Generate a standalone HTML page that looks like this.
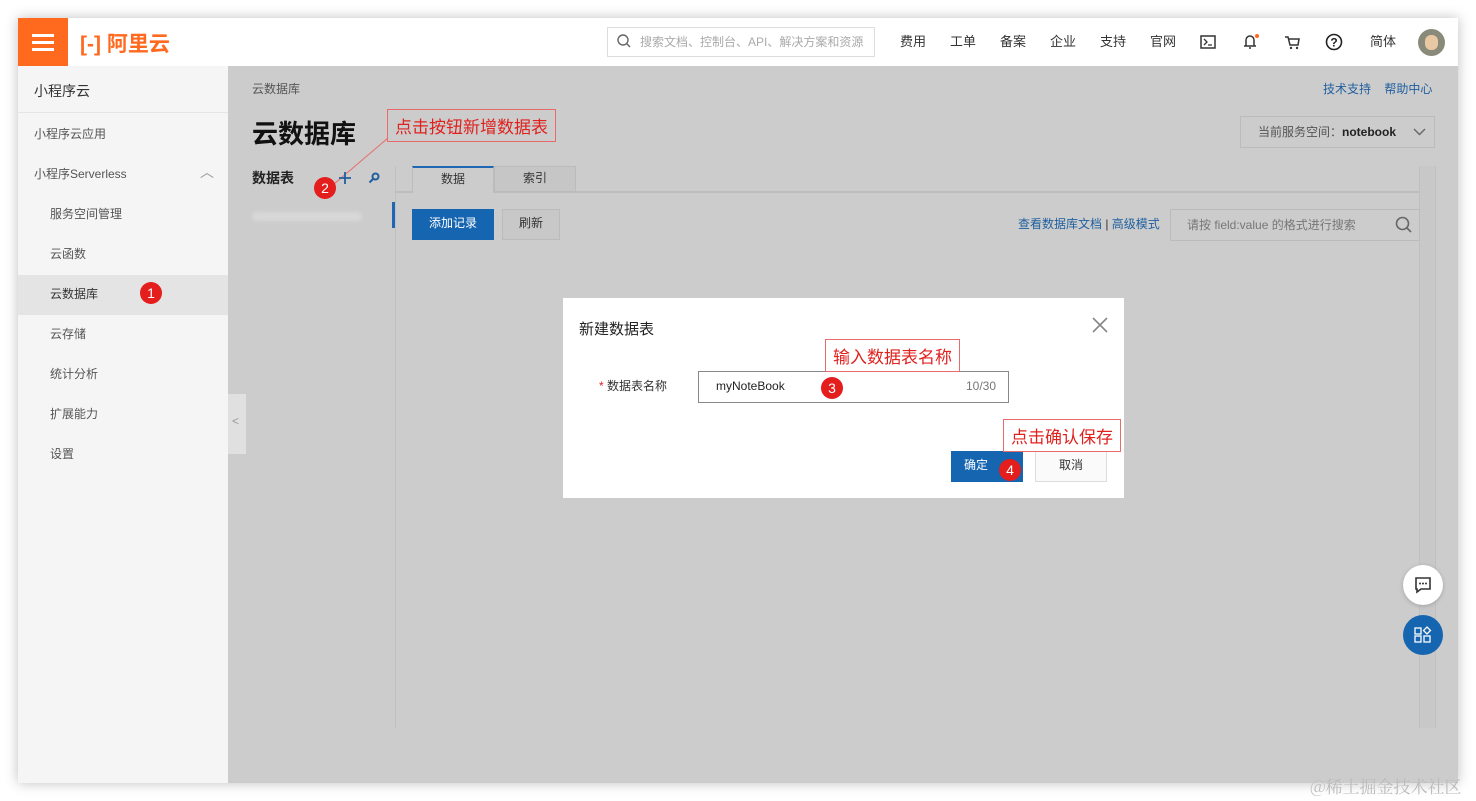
<!DOCTYPE html>
<html><head><meta charset="utf-8">
<style>
*{box-sizing:border-box;margin:0;padding:0}
body{width:1476px;height:801px;background:#fff;font-family:"Liberation Sans","Noto Sans CJK SC",sans-serif;position:relative;overflow:hidden;color:#333}
.win{position:absolute;left:18px;top:18px;width:1440px;height:765px;box-shadow:0 0 12px rgba(0,0,0,.25);background:#cccccc;overflow:hidden}
.hdr{position:absolute;left:0;top:0;width:1440px;height:48px;background:#fff}
.burger{position:absolute;left:0;top:0;width:50px;height:48px;background:#ff6a1f}
.burger i{position:absolute;left:14px;width:22px;height:3px;background:#fff}
.logo{position:absolute;left:62px;top:10px;color:#ff6a1f;font-size:21px;font-weight:bold}
.search{position:absolute;left:589px;top:9px;width:268px;height:30px;border:1px solid #ddd;font-size:12px;color:#aaa;padding:5px 0 0 32px}
.nav{position:absolute;top:13px;font-size:13px;color:#333}
.side{position:absolute;left:0;top:48px;width:210px;height:717px;background:#f5f5f5}
.side div{position:absolute;left:16px;font-size:12px;color:#555}
.main{position:absolute;left:210px;top:48px;width:1230px;height:717px;background:#cccccc}
.red{position:absolute;border:1px solid #e86a6a;color:#e0221f;font-size:17px;background:#cccccc;padding:3px 7px;white-space:nowrap}
.dot{position:absolute;width:22px;height:22px;border-radius:50%;background:#e41d1d;color:#fff !important;font-size:14px !important;text-align:center;line-height:22px}
.blue{color:#1f5f9f}
.modal{position:absolute;left:545px;top:280px;width:561px;height:200px;background:#fff}
</style></head><body>
<div class="win">
 <div class="hdr">
  <div class="burger"><i style="top:16px"></i><i style="top:23px"></i><i style="top:30px"></i></div>
  <div class="logo">[-] 阿里云</div>
  <div class="search">搜索文档、控制台、API、解决方案和资源</div>
  <svg style="position:absolute;left:599px;top:16px" width="14" height="14"><circle cx="6" cy="6" r="5" fill="none" stroke="#666" stroke-width="1.4"/><line x1="10" y1="10" x2="13" y2="13" stroke="#666" stroke-width="1.4"/></svg>
  <div class="nav" style="left:882px">费用</div><div class="nav" style="left:932px">工单</div><div class="nav" style="left:982px">备案</div><div class="nav" style="left:1032px">企业</div><div class="nav" style="left:1082px">支持</div><div class="nav" style="left:1132px">官网</div>
  <svg style="position:absolute;left:1182px;top:17px" width="16" height="14"><rect x="1" y="1" width="14" height="12" fill="none" stroke="#333" stroke-width="1.5"/><path d="M4 4l3 3-3 3M8 10h4" stroke="#333" fill="none" stroke-width="1.3"/></svg>
  <svg style="position:absolute;left:1224px;top:15px" width="18" height="18"><path d="M4 13V7a4 4 0 018 0v6zM2 13h12M7 15h2" stroke="#333" fill="none" stroke-width="1.5"/><circle cx="15" cy="3" r="2" fill="#ff6a1f"/></svg>
  <svg style="position:absolute;left:1266px;top:17px" width="16" height="15"><path d="M1 2h3l2 8h8l1-6H5" stroke="#333" fill="none" stroke-width="1.5"/><circle cx="7" cy="13" r="1.2" fill="#333"/><circle cx="13" cy="13" r="1.2" fill="#333"/></svg>
  <svg style="position:absolute;left:1307px;top:15px" width="18" height="18"><circle cx="9" cy="9" r="7.5" fill="none" stroke="#222" stroke-width="1.6"/><text x="9" y="13.5" font-size="12" font-weight="bold" text-anchor="middle" fill="#222" font-family="Liberation Sans">?</text></svg>
  <div class="nav" style="left:1352px">简体</div>
  <div style="position:absolute;left:1400px;top:11px;width:27px;height:27px;border-radius:50%;background:#8a8a7a"><div style="position:absolute;left:7px;top:6px;width:13px;height:15px;border-radius:6px;background:#e9c9a4"></div></div>
 </div>
 <div class="side">
  <div style="top:15px;font-size:14px;color:#333">小程序云</div>
  <div style="left:0;top:46px;width:210px;height:1px;background:#e5e5e5"></div>
  <div style="top:59px">小程序云应用</div>
  <div style="top:99px">小程序Serverless</div>
  <div style="left:182px;top:96px;color:#999;font-size:14px">︿</div>
  <div style="top:139px;left:32px">服务空间管理</div>
  <div style="top:179px;left:32px">云函数</div>
  <div style="left:0;top:209px;width:210px;height:40px;background:#e4e4e4"></div>
  <div style="top:219px;left:32px;color:#333">云数据库</div>
  <div class="dot" style="left:122px;top:216px">1</div>
  <div style="top:259px;left:32px">云存储</div>
  <div style="top:299px;left:32px">统计分析</div>
  <div style="top:339px;left:32px">扩展能力</div>
  <div style="top:379px;left:32px">设置</div>
 </div>
 <div class="main">
  <div style="position:absolute;left:0;top:328px;width:18px;height:60px;background:#e0e0e0;color:#999;font-size:12px;padding:20px 0 0 4px">&lt;</div>
  <div style="position:absolute;left:24px;top:14px;font-size:12px;color:#555">云数据库</div>
  <div style="position:absolute;left:24px;top:48px;font-size:26px;font-weight:bold;color:#111">云数据库</div>
  <div class="red" style="left:159px;top:43px">点击按钮新增数据表</div>
  <svg style="position:absolute;left:100px;top:70px" width="70" height="50"><line x1="60" y1="2" x2="6" y2="48" stroke="#e86a6a"/></svg>
  <div style="position:absolute;left:24px;top:102px;font-size:14px;font-weight:bold;color:#222">数据表</div>
  <div class="dot" style="left:86px;top:111px">2</div>
  <svg style="position:absolute;left:110px;top:105px" width="14" height="14"><path d="M7 1v12M1 7h12" stroke="#1f5f9f" stroke-width="1.8"/></svg>
  <svg style="position:absolute;left:140px;top:106px" width="12" height="12"><circle cx="7.5" cy="4.5" r="3" fill="none" stroke="#1f5f9f" stroke-width="2"/><line x1="5.5" y1="6.5" x2="1.5" y2="10.5" stroke="#1f5f9f" stroke-width="2"/></svg>
  <div style="position:absolute;left:24px;top:146px;width:110px;height:9px;background:#d8d8d8;border-radius:4px;filter:blur(2px)"></div>
  <div style="position:absolute;left:164px;top:136px;width:3px;height:26px;background:#1f67b3"></div>
  <div style="position:absolute;left:167px;top:100px;width:1025px;height:562px;border-left:1px solid #c0c0c0;border-right:1px solid #c0c0c0"></div>
  <div style="position:absolute;left:1192px;top:100px;width:16px;height:562px;border-right:1px solid #c0c0c0;background:#c8c8c8"></div>
  <div style="position:absolute;left:167px;top:125px;width:1025px;height:2px;background:#bdbdbd"></div>
  <div style="position:absolute;left:184px;top:100px;width:82px;height:27px;background:#cccccc;border-top:2px solid #1f67b3;border-left:1px solid #bbb;border-right:1px solid #bbb;text-align:center;font-size:12px;line-height:22px">数据</div>
  <div style="position:absolute;left:266px;top:100px;width:82px;height:26px;border:1px solid #bbb;text-align:center;font-size:12px;line-height:22px;background:#c6c6c6">索引</div>
  <div style="position:absolute;left:184px;top:143px;width:82px;height:31px;background:#1565b0;color:#fff;font-size:12px;text-align:center;line-height:29px">添加记录</div>
  <div style="position:absolute;left:274px;top:143px;width:58px;height:31px;border:1px solid #bbb;background:#c8c8c8;font-size:12px;text-align:center;line-height:27px">刷新</div>
  <div class="blue" style="position:absolute;left:790px;top:149px;font-size:12px">查看数据库文档 <span style="color:#333">|</span> 高级模式</div>
  <div style="position:absolute;left:942px;top:143px;width:250px;height:32px;border:1px solid #bbb;font-size:12px;color:#777;padding:6px 0 0 16px">请按 field:value 的格式进行搜索</div>
  <svg style="position:absolute;left:1167px;top:150px" width="18" height="18"><circle cx="7.5" cy="7.5" r="6" fill="none" stroke="#666" stroke-width="1.6"/><line x1="12" y1="12" x2="16" y2="16" stroke="#666" stroke-width="1.6"/></svg>
  <div class="blue" style="position:absolute;left:1095px;top:14px;font-size:12px">技术支持 &nbsp;&nbsp; 帮助中心</div>
  <div style="position:absolute;left:1012px;top:50px;width:195px;height:32px;border:1px solid #bbb;font-size:12px;color:#555;padding:6px 0 0 17px">当前服务空间：<b style="color:#222">notebook</b><svg style="position:absolute;right:8px;top:11px" width="13" height="8"><path d="M1 1l5.5 5.5L12 1" fill="none" stroke="#666" stroke-width="1.4"/></svg></div>
 </div>
 <div class="modal">
  <div style="position:absolute;left:16px;top:20px;font-size:15px;color:#222">新建数据表</div>
  <svg style="position:absolute;left:529px;top:19px" width="16" height="16"><path d="M1 1l14 14M15 1L1 15" stroke="#888" stroke-width="1.6"/></svg>
  <div style="position:absolute;left:36px;top:79px;font-size:12px;color:#333"><span style="color:#e41d1d">* </span>数据表名称</div>
  <div style="position:absolute;left:135px;top:73px;width:311px;height:32px;border:1.5px solid #888;font-size:12px;padding:7px 17px;color:#222">myNoteBook<span style="position:absolute;right:12px;color:#777">10/30</span></div>
  <div class="red" style="left:262px;top:41px;background:#fff">输入数据表名称</div>
  <div class="dot" style="left:258px;top:79px">3</div>
  <div style="position:absolute;left:388px;top:153px;width:72px;height:31px;background:#1565b0;color:#fff;font-size:12px;line-height:29px;padding-left:13px">确定</div>
  <div style="position:absolute;left:472px;top:153px;width:72px;height:31px;border:1px solid #ddd;background:#fafafa;font-size:12px;text-align:center;line-height:27px">取消</div>
  <div class="red" style="left:440px;top:121px;background:#fff">点击确认保存</div>
  <div class="dot" style="left:436px;top:161px">4</div>
 </div>
 <div style="position:absolute;left:1385px;top:547px;width:40px;height:40px;border-radius:50%;background:#fff;box-shadow:0 1px 4px rgba(0,0,0,.2)"><svg style="position:absolute;left:11px;top:11px" width="18" height="18"><path d="M2 2h14v11H7l-4 3v-3H2z" fill="none" stroke="#333" stroke-width="1.6"/><circle cx="6" cy="7.5" r="1" fill="#333"/><circle cx="9" cy="7.5" r="1" fill="#333"/><circle cx="12" cy="7.5" r="1" fill="#333"/></svg></div>
 <div style="position:absolute;left:1385px;top:597px;width:40px;height:40px;border-radius:50%;background:#1565b0"><svg style="position:absolute;left:11px;top:11px" width="18" height="18"><g fill="none" stroke="#fff" stroke-width="1.3"><rect x="1" y="2" width="6" height="6"/><rect x="1" y="10" width="6" height="6"/><rect x="10" y="10" width="6" height="6"/><path d="M13 1l3.5 3.5L13 8 9.5 4.5z"/></g></svg></div>
</div>
<div style="position:absolute;left:1310px;top:773px;font-size:17px;color:#bbb;font-family:'Noto Serif CJK SC',serif">@稀土掘金技术社区</div>
</body></html>
